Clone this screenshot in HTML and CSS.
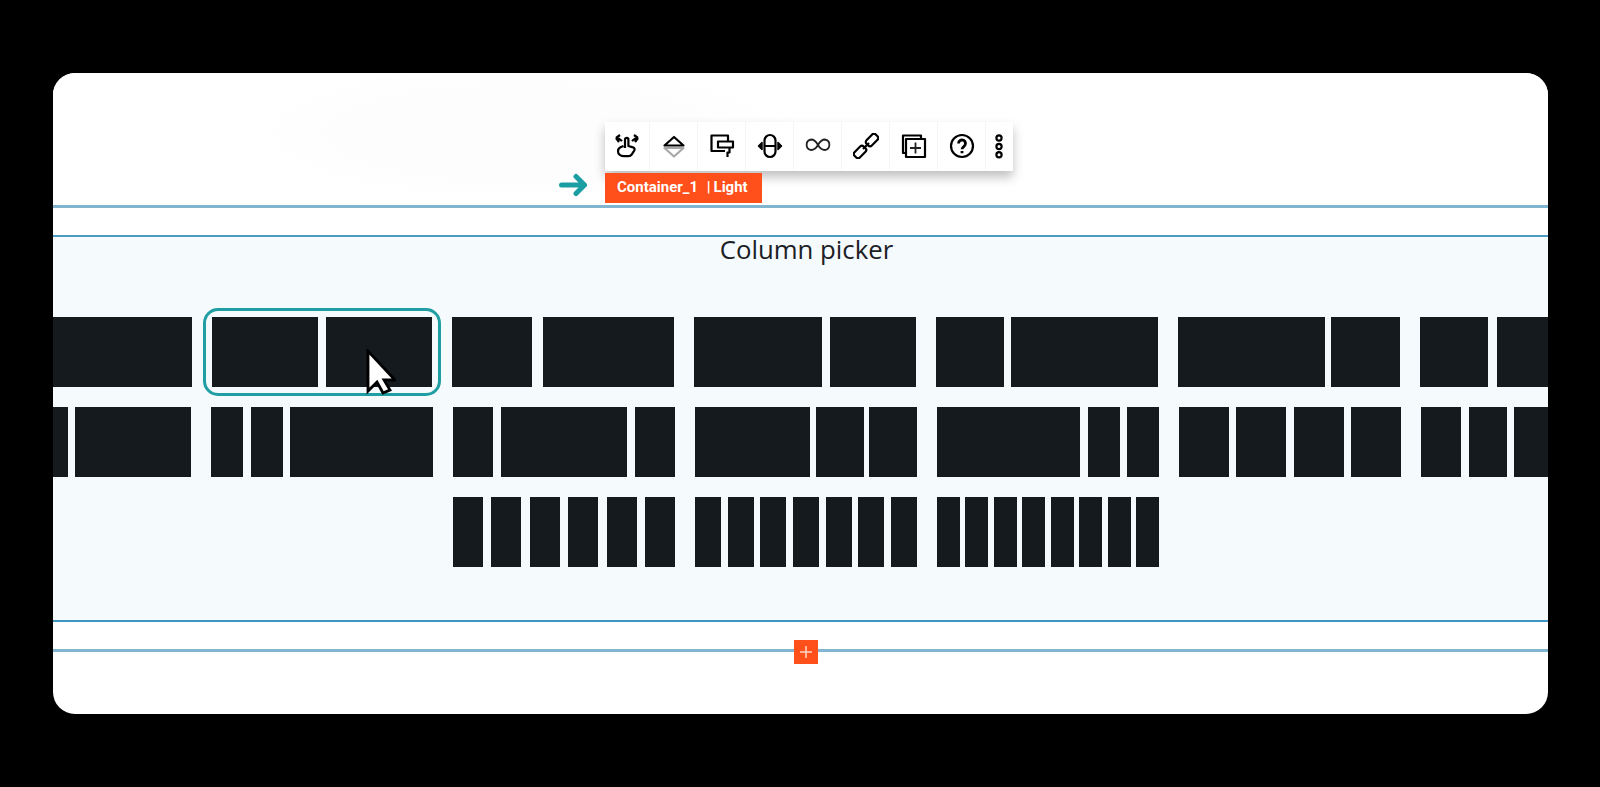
FILE: index.html
```html
<!DOCTYPE html>
<html lang="en">
<head>
    <meta charset="UTF-8">
    <meta name="viewport" content="width=device-width, initial-scale=1.0">
    <title>Column picker</title>
    <link rel="stylesheet" href="styles.css">
</head>
<body>

    <div class="panel">
        <div class="top-zone"></div>

        <div class="toolbar">
            <div class="tool tool-first">
                <svg viewBox="0 0 26 26"><path d="M2 5l4-3M2 5l3 4M2 5c2 0 4 1 6 3M24 5l-4-3M24 5l-3 4M24 5c-2 0-4 1-6 3"/><path d="M11 15V6.500a1.700 1.700 0 0 1 3.400 0V13l4.600 1.400c1.600.4 2 2 1.200 3.300l-2.400 3.700a4 4 0 0 1-3.300 1.800H9.500C6.400 23.200 4 21 4 18.200c0-2 1-3.300 3-4.200l2.500-1"/></svg>
            </div>
            <div class="tool">
                <svg viewBox="0 0 26 26"><path d="M3.500 12.500h19L13 4z"/><path class="muted" d="M3.500 15h19L13 23.500z"/></svg>
            </div>
            <div class="tool">
                <svg viewBox="0 0 26 26"><path d="M16 18H2.500V2.500H19V8"/><path d="M9 8.500h15v6H9z"/><path d="M20.500 15v4.500H18.500V24"/></svg>
            </div>
            <div class="tool">
                <svg viewBox="0 0 26 26"><rect x="7.500" y="2" width="11" height="22" rx="5.500"/><path d="M7.500 13h11"/><path class="solid" d="M5 9.500L1.500 13 5 16.500zM21 9.500l3.500 3.500-3.500 3.500z"/></svg>
            </div>
            <div class="tool tool-raised">
                <svg viewBox="0 0 26 26"><path class="thin" d="M13 13c-2-3.500-4-5.500-6.800-5.500a5.300 5.300 0 0 0 0 10.500c2.800 0 4.800-1.500 6.800-5s4-5.500 6.800-5.500a5.300 5.300 0 0 1 0 10.500c-2.800 0-4.800-1.500-6.800-5z"/></svg>
            </div>
            <div class="tool">
                <svg viewBox="0 0 26 26"><rect x="0.500" y="15.250" width="13" height="7.500" rx="2.500" transform="rotate(-45 7 19)"/><rect x="12.500" y="3.250" width="13" height="7.500" rx="2.500" transform="rotate(-45 19 7)"/><path d="M10 16l6-6"/></svg>
            </div>
            <div class="tool">
                <svg viewBox="0 0 26 26"><path d="M5 20H2V2.500h18V6"/><path d="M5 6h19v18H5z"/><path class="thin" d="M14.500 9.500v11M9 15h11"/></svg>
            </div>
            <div class="tool">
                <svg viewBox="0 0 26 26"><circle cx="13" cy="13" r="11"/><path class="bold" d="M9.500 10.500a3.500 3.500 0 1 1 5.600 2.800c-1.300 1-2.100 1.600-2.100 3"/><path class="bold" d="M13 18v2.200"/></svg>
            </div>
            <div class="tool tool-last">
                <svg class="dots" viewBox="0 0 12 26"><circle cx="6" cy="5" r="2.600"/><circle cx="6" cy="13.500" r="2.600"/><circle cx="6" cy="21.800" r="2.600"/></svg>
            </div>
        </div>

        <svg class="arrow" viewBox="0 0 30 24"><path d="M2.500 12h23M17 3.500l8.500 8.500-8.500 8.500"/></svg>
        <div class="tag">Container_1 &nbsp;&nbsp;| Light</div>

        <div class="section">
            <h2 class="section-title">Column picker</h2>

            <div class="picker-row row-a">
                <div class="picker picker-wide"><div class="cell"></div></div>
                <div class="picker picker-selected cols-a1"><div class="cell"></div><div class="cell"></div></div>
                <div class="picker cols-a2"><div class="cell"></div><div class="cell"></div></div>
                <div class="picker cols-a3"><div class="cell"></div><div class="cell"></div></div>
                <div class="picker cols-a4"><div class="cell"></div><div class="cell"></div></div>
                <div class="picker cols-a5"><div class="cell"></div><div class="cell"></div></div>
                <div class="picker cols-a6"><div class="cell"></div><div class="cell"></div></div>
            </div>

            <div class="picker-row">
                <div class="picker cols-b0"><div class="cell"></div><div class="cell"></div></div>
                <div class="picker cols-b1"><div class="cell"></div><div class="cell"></div><div class="cell"></div></div>
                <div class="picker cols-b2"><div class="cell"></div><div class="cell"></div><div class="cell"></div></div>
                <div class="picker cols-b3"><div class="cell"></div><div class="cell"></div><div class="cell"></div></div>
                <div class="picker cols-b4"><div class="cell"></div><div class="cell"></div><div class="cell"></div></div>
                <div class="picker cols-b5"><div class="cell"></div><div class="cell"></div><div class="cell"></div><div class="cell"></div></div>
                <div class="picker cols-b6"><div class="cell"></div><div class="cell"></div><div class="cell"></div><div class="cell"></div><div class="cell"></div></div>
            </div>

            <div class="picker-row row-c">
                <div class="picker cols-c6"><div class="cell"></div><div class="cell"></div><div class="cell"></div><div class="cell"></div><div class="cell"></div><div class="cell"></div></div>
                <div class="picker cols-c7"><div class="cell"></div><div class="cell"></div><div class="cell"></div><div class="cell"></div><div class="cell"></div><div class="cell"></div><div class="cell"></div></div>
                <div class="picker cols-c8"><div class="cell"></div><div class="cell"></div><div class="cell"></div><div class="cell"></div><div class="cell"></div><div class="cell"></div><div class="cell"></div><div class="cell"></div></div>
            </div>
        </div>

        <div class="bottom-zone"></div>
        <div class="add-btn">
            <svg viewBox="0 0 24 24"><path d="M12 6v12M6 12h12"/></svg>
        </div>

        <svg class="cursor" viewBox="0 0 30 46"><path d="M2 2v40l9-9 6 11 7-3-6-10h11z"/></svg>
    </div>

</body>
</html>
```

FILE: styles.css
```css
body {
    margin: 0;
    background-color: #000;
    font-family: "Roboto", sans-serif;
}

.panel {
    position: relative;
    width: 1495px;
    height: 641px;
    margin: 73px 0 0 53px;
    background-color: #fff;
    border-radius: 22px;
    overflow: hidden;
}

.top-zone {
    height: 132px;
    border-bottom: 3px solid #82b6d0;
    background: radial-gradient(ellipse 280px 70px at 470px 60px, #fdfdfd 60%, #fff 100%);
}

.bottom-zone {
    height: 61px;
    margin-top: 27px;
    border-top: 3px solid #82b6d0;
}

/* toolbar */
.toolbar {
    position: absolute;
    left: 552px;
    top: 49px;
    display: flex;
    height: 49px;
    background-color: #fff;
    box-shadow: 0 6px 10px rgba(0, 0, 0, 0.25);
}

.tool {
    display: flex;
    align-items: center;
    justify-content: center;
    width: 48px;
    padding-bottom: 2px;
    border-right: 1px solid #f6f6f6;
    box-sizing: border-box;
}

.tool-first {
    width: 45px;
}

.tool-raised {
    padding-bottom: 4px;
}

.tool-last {
    width: 27px;
    padding-right: 2px;
    border-right: none;
}

.tool svg {
    width: 26px;
    height: 26px;
    fill: none;
    stroke: #000;
    stroke-width: 2.2;
    stroke-linejoin: round;
}

.tool svg.dots {
    width: 12px;
}

.tool .muted {
    stroke: #a8a8a8;
}

.tool .thin {
    stroke-width: 1.8;
    stroke: #222;
}

.tool .bold {
    stroke-width: 2.8;
}

.tool .solid {
    fill: #000;
    stroke-width: 1.5;
}

.tag {
    position: absolute;
    left: 552px;
    top: 100px;
    width: 157px;
    height: 30px;
    padding-left: 12px;
    box-sizing: border-box;
    background-color: #ff4f1a;
    color: #fff;
    font-size: 15px;
    font-weight: 700;
    line-height: 29px;
    word-spacing: -0.8px;
    white-space: nowrap;
}

.arrow {
    position: absolute;
    left: 506px;
    top: 100px;
    width: 30px;
    height: 24px;
    fill: none;
    stroke: #1b9ea3;
    stroke-width: 5;
    stroke-linecap: round;
    stroke-linejoin: round;
}

/* column picker */
.section {
    box-sizing: border-box;
    margin-top: 27px;
    height: 387px;
    background-color: #f5fafd;
    border-top: 2px solid #4d9bc0;
    border-bottom: 2px solid #3f94c2;
}

.section-title {
    margin: 0 0 56px 12px;
    color: #1b2024;
    font-family: "Open Sans", sans-serif;
    font-size: 25.75px;
    font-weight: 400;
    line-height: 24px;
    text-align: center;
}

.picker-row {
    display: grid;
    grid-template-columns: repeat(7, 222px);
    column-gap: 20px;
    margin: 0 0 20px -84px;
}

.row-a {
    margin-left: -85px;
}

.row-c .picker:first-child {
    grid-column-start: 3;
}

.picker {
    display: grid;
    justify-content: space-between;
    height: 70px;
}

.cell {
    height: 70px;
    background-color: #151a1e;
}

.picker-wide {
    grid-template-columns: 224px;
}

.picker-selected {
    margin-left: 2px;
    border-radius: 6px;
    outline: 3px solid #1f9ea3;
    outline-offset: 6px;
}

.cols-a1 { grid-template-columns: 106px 106px; }
.cols-a2 { grid-template-columns: 80px 131px; }
.cols-a3 { grid-template-columns: 128px 86px; }
.cols-a4 { grid-template-columns: 68px 147px; }
.cols-a5 { grid-template-columns: 147px 69px; }
.cols-a6 { grid-template-columns: 68px 145px; }

.cols-b0 { grid-template-columns: 99px 116px; }
.cols-b1 { grid-template-columns: 32px 32px 143px; }
.cols-b2 { grid-template-columns: 40px 126px 40px; }
.cols-b3 { grid-template-columns: 115px 48px 48px; }
.cols-b4 { grid-template-columns: 143px 32px 32px; }
.cols-b5 { grid-template-columns: repeat(4, 50px); }
.cols-b6 { grid-template-columns: 40px repeat(4, 38px); }

.cols-c6 { grid-template-columns: repeat(6, 30px); }
.cols-c7 { grid-template-columns: repeat(7, 26px); }
.cols-c8 { grid-template-columns: repeat(8, 23px); }

/* overlays */
.add-btn {
    position: absolute;
    left: 741px;
    top: 567px;
    width: 24px;
    height: 24px;
    background-color: #ff4f1a;
}

.add-btn svg {
    display: block;
    fill: none;
    stroke: #ffd8c6;
    stroke-width: 1.500;
}

.cursor {
    position: absolute;
    left: 313px;
    top: 276px;
    width: 30px;
    height: 46px;
    fill: #fff;
    stroke: #000;
    stroke-width: 2.800;
}
```
